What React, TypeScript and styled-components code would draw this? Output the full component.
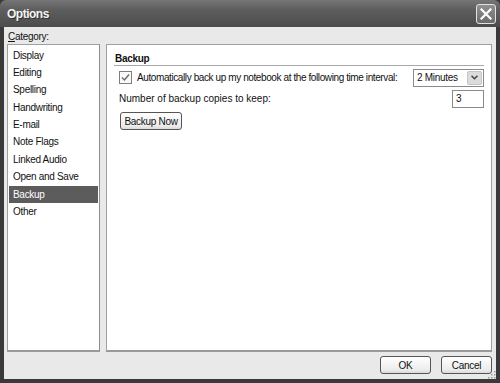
import styled, { createGlobalStyle } from "styled-components";

const GlobalStyle = createGlobalStyle`
    html, body {
        margin: 0;
        padding: 0;
        background: #ffffff;
    }
    * {
        box-sizing: border-box;
    }
`;

const Window = styled.div`
    width: 500px;
    height: 383px;
    display: flex;
    flex-direction: column;
    background: #3a3a3a;
    font-family: "Liberation Sans", Arial, sans-serif;
    font-size: 10px;
    letter-spacing: -0.3px;
    color: #111;
    overflow: hidden;
    white-space: nowrap;
`;

const TitleBar = styled.div`
    height: 27px;
    flex: none;
    display: flex;
    align-items: center;
    justify-content: space-between;
    padding: 0 4px 0 7px;
    background: linear-gradient(#767676 0%, #5e5e5e 35%, #4c4c4c 100%);
    border-radius: 6px 6px 0 0;
`;

const Title = styled.span`
    color: #f4f4f4;
    font-weight: bold;
    font-size: 12px;
    letter-spacing: -0.5px;
    text-shadow: 1px 1px 0 #333;
`;

const CloseButton = styled.div`
    width: 20px;
    height: 20px;
    margin-top: 1px;
    border: 1px solid #e2e2e2;
    border-radius: 3px;
    background: linear-gradient(#909090, #6c6c6c);
    display: flex;
    align-items: center;
    justify-content: center;
`;

const Client = styled.div`
    flex: 1;
    margin: 0 4px 4px 4px;
    padding: 3px 4px 5px 3px;
    background: #e9e9e9;
    display: flex;
    flex-direction: column;
`;

const CategoryLabel = styled.div`
    height: 14px;
    line-height: 14px;
    padding-left: 1px;
    u {
        text-decoration: underline;
    }
`;

const Body = styled.div`
    height: 308px;
    display: grid;
    grid-template-columns: 93px 1fr;
    gap: 6px;
`;

const CategoryList = styled.div`
    background: #fff;
    border: 1px solid #a0a0a0;
    border-right-color: #8c8c8c;
    border-bottom: 2px solid #9a9a9a;
    padding: 1.5px 1px;
    display: flex;
    flex-direction: column;
`;

const CategoryItem = styled.div<{ $selected?: boolean }>`
    height: 17.4px;
    line-height: 17.4px;
    padding-left: 4px;
    background: ${(p) => (p.$selected ? "#5c5c5c" : "transparent")};
    color: ${(p) => (p.$selected ? "#ffffff" : "#111")};
`;

const Panel = styled.div`
    background: #fff;
    border: 1px solid #a0a0a0;
    border-bottom: 2px solid #9a9a9a;
    padding: 6px 7px 0 7px;
    display: flex;
    flex-direction: column;
`;

const SectionTitle = styled.div`
    font-weight: bold;
    height: 15px;
    line-height: 15px;
    padding-left: 1px;
    border-bottom: 1px solid #a8a8a8;
`;

const Row = styled.div<{ $spacing?: string }>`
    display: flex;
    align-items: center;
    justify-content: space-between;
    padding-left: 5px;
    height: 21px;
    letter-spacing: ${(p) => p.$spacing ?? "-0.3px"};
`;

const CheckLabel = styled.label`
    display: flex;
    align-items: center;
    gap: 5px;
`;

const CheckBox = styled.span`
    width: 13px;
    height: 13px;
    border: 1px solid #7e7e7e;
    background: #fafafa;
    display: flex;
    align-items: center;
    justify-content: center;
`;

const Select = styled.div`
    width: 71px;
    height: 18px;
    border: 1px solid #8a8a8a;
    display: flex;
    align-items: center;
    justify-content: space-between;
    padding: 0 1px 0 3px;
    background: #fff;
    letter-spacing: -0.3px;
`;

const SelectArrow = styled.span`
    width: 15px;
    height: 14px;
    background: #dcdcdc;
    border: 1px solid #c4c4c4;
    border-radius: 2px;
    display: flex;
    align-items: center;
    justify-content: center;
`;

const NumberBox = styled.div`
    width: 32px;
    height: 18px;
    border: 1px solid #8a8a8a;
    padding-left: 3px;
    line-height: 16px;
    background: #fff;
`;

const ButtonRow = styled.div`
    display: flex;
    margin-top: 3px;
    padding-left: 6px;
`;

const PushButton = styled.div<{ $width: number }>`
    width: ${(p) => p.$width}px;
    height: 18px;
    border: 1px solid #555;
    border-radius: 3px;
    background: linear-gradient(#ffffff, #ececec 80%, #dadada);
    display: flex;
    align-items: center;
    justify-content: center;
`;

const Footer = styled.div`
    margin-top: 4px;
    display: flex;
    justify-content: flex-end;
    gap: 10px;
    position: relative;
`;

const Grip = styled.svg`
    position: absolute;
    right: -4px;
    bottom: -5px;
`;

const categories = [
    "Display",
    "Editing",
    "Spelling",
    "Handwriting",
    "E-mail",
    "Note Flags",
    "Linked Audio",
    "Open and Save",
    "Backup",
    "Other",
];

export default function App() {
    return (
        <>
            <GlobalStyle />
            <Window>
                <TitleBar>
                    <Title>Options</Title>
                    <CloseButton>
                        <svg width="12" height="12" viewBox="0 0 12 12">
                            <path d="M1.5 1.5 L10.5 10.5 M10.5 1.5 L1.5 10.5" stroke="#fff" strokeWidth="2.2" strokeLinecap="square" />
                        </svg>
                    </CloseButton>
                </TitleBar>
                <Client>
                    <CategoryLabel>
                        <u>C</u>ategory:
                    </CategoryLabel>
                    <Body>
                        <CategoryList>
                            {categories.map((c) => (
                                <CategoryItem key={c} $selected={c === "Backup"}>
                                    {c}
                                </CategoryItem>
                            ))}
                        </CategoryList>
                        <Panel>
                            <SectionTitle>Backup</SectionTitle>
                            <Row $spacing="-0.4px" style={{ marginTop: 1 }}>
                                <CheckLabel>
                                    <CheckBox>
                                        <svg width="9" height="9" viewBox="0 0 9 9">
                                            <path d="M1 4.5 L3.5 7 L8 1.5" stroke="#6a6a6a" strokeWidth="1.4" fill="none" />
                                        </svg>
                                    </CheckBox>
                                    Automatically back up my notebook at the following time interval:
                                </CheckLabel>
                                <Select>
                                    <span>2 Minutes</span>
                                    <SelectArrow>
                                        <svg width="7" height="5" viewBox="0 0 7 5">
                                            <path d="M0.5 0.8 L3.5 3.8 L6.5 0.8" stroke="#444" strokeWidth="1.5" fill="none" />
                                        </svg>
                                    </SelectArrow>
                                </Select>
                            </Row>
                            <Row $spacing="0px">
                                <span>Number of backup copies to keep:</span>
                                <NumberBox>3</NumberBox>
                            </Row>
                            <ButtonRow>
                                <PushButton $width={62}>Backup Now</PushButton>
                            </ButtonRow>
                        </Panel>
                    </Body>
                    <Footer>
                        <PushButton $width={51}>OK</PushButton>
                        <PushButton $width={51}>Cancel</PushButton>
                        <Grip width="8" height="8" viewBox="0 0 8 8">
                            <g fill="#9a9a9a">
                                <rect x="6" y="0" width="1.5" height="1.5" />
                                <rect x="3" y="3" width="1.5" height="1.5" />
                                <rect x="6" y="3" width="1.5" height="1.5" />
                                <rect x="0" y="6" width="1.5" height="1.5" />
                                <rect x="3" y="6" width="1.5" height="1.5" />
                                <rect x="6" y="6" width="1.5" height="1.5" />
                            </g>
                        </Grip>
                    </Footer>
                </Client>
            </Window>
        </>
    );
}
